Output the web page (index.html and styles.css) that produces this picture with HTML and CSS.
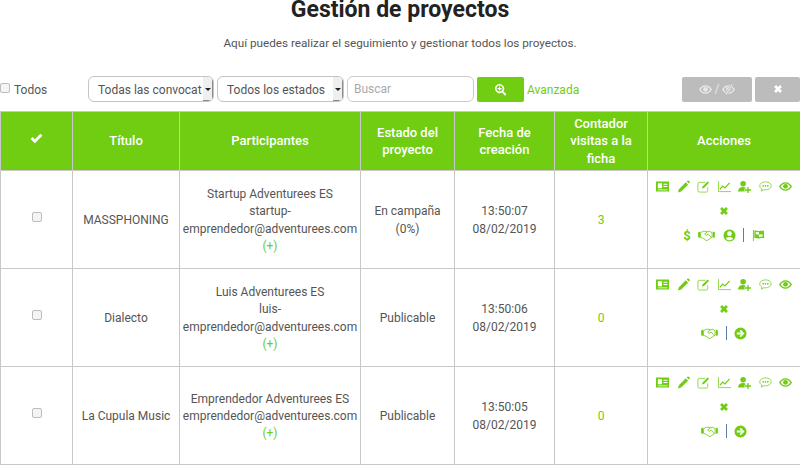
FILE: index.html
```html
<!DOCTYPE html>
<html lang="es">

<head>
    <meta charset="UTF-8" />
    <meta name="viewport" content="width=device-width, initial-scale=1.0" />
    <link rel="stylesheet" href="styles.css">
    <title>Gestión de proyectos</title>
</head>

<body>
    <svg class="sprites" width="0" height="0">
        <symbol id="i-card" viewBox="0 0 14 12">
            <path fill-rule="evenodd" d="M0 .5h14v11H0zM2 2.500v5.500h4.500V2.500zM8 3v1h4.300V3zM8 5.500v1h4.300v-1zM2 9.200v.8h10.300v-.8z" />
        </symbol>
        <symbol id="i-pencil" viewBox="0 0 14 14">
            <path d="M9.500 2.500l2.500 2.500-7.500 7.500-3.500 1 1-3.500zM10.500 1.500l.8-.8c.4-.3 1-.3 1.300 0l1 1c.3.400.3.900 0 1.300l-.8.800z" />
        </symbol>
        <symbol id="i-edit" viewBox="0 0 14 14">
            <path fill="none" stroke="currentColor" stroke-width=".8" d="M11.500 8v3.500a1.500 1.500 0 0 1-1.500 1.500H2.500A1.500 1.500 0 0 1 1 11.500V4a1.500 1.500 0 0 1 1.500-1.500H9" />
            <path d="M11.500 1.500l1.500 1.500-5.500 5.500-2.200.7.700-2.200z" />
        </symbol>
        <symbol id="i-chart" viewBox="0 0 14 14">
            <path fill="none" stroke="currentColor" stroke-width=".8" d="M.5 1v11.500H14" />
            <path fill="none" stroke="currentColor" stroke-width="1.300" d="M2 10l3-3.500 2.500 2L12.500 3" />
        </symbol>
        <symbol id="i-user-add" viewBox="0 0 14 14">
            <circle cx="5.500" cy="4" r="3" />
            <path d="M0 12.500c0-3 2-5 5.500-5 1 0 1.900.2 2.600.5v1.500H7v2.500h1v.500zM10 7.500h1.500V10H14v1.500h-2.500V14H10v-2.500H7.500V10H10z" />
        </symbol>
        <symbol id="i-comment" viewBox="0 0 14 14">
            <path fill="none" stroke="currentColor" stroke-width=".8" d="M7 2C3.500 2 .8 3.900.8 6.300c0 1.400.9 2.600 2.300 3.400L2.600 12l2.700-1.600c.5.100 1.100.2 1.700.2 3.500 0 6.200-1.900 6.200-4.300S10.500 2 7 2z" />
            <circle cx="4.500" cy="6.300" r=".9" />
            <circle cx="7" cy="6.300" r=".9" />
            <circle cx="9.500" cy="6.300" r=".9" />
        </symbol>
        <symbol id="i-eye" viewBox="0 0 14 14">
            <path fill-rule="evenodd" d="M7 2.500c3 0 5.500 1.800 7 4.500-1.500 2.700-4 4.500-7 4.500S1.500 9.700 0 7c1.500-2.700 4-4.500 7-4.500zM7 3.800C5 3.800 3.200 5 1.800 7 3.200 9 5 10.200 7 10.200S10.800 9 12.200 7C10.800 5 9 3.800 7 3.800z" />
            <circle cx="7" cy="6.800" r="2.600" />
        </symbol>
        <symbol id="i-eye-off" viewBox="0 0 14 14">
            <path fill-rule="evenodd" d="M7 2.500c3 0 5.500 1.800 7 4.500-1.500 2.700-4 4.500-7 4.500S1.500 9.700 0 7c1.500-2.700 4-4.500 7-4.500zM7 3.800C5 3.800 3.200 5 1.800 7 3.200 9 5 10.200 7 10.200S10.800 9 12.200 7C10.800 5 9 3.800 7 3.800z" />
            <circle cx="7" cy="6.800" r="2.600" />
            <path fill="none" stroke="#bcbcbc" stroke-width="2.600" d="M11 1.500L4 12.500" />
            <path fill="none" stroke="currentColor" stroke-width="1.100" d="M11 1.500L4 12.500" />
        </symbol>
        <symbol id="i-remove" viewBox="0 0 14 14">
            <path d="M4.200 1.500L7 4.300l2.800-2.800 2.700 2.700L9.700 7l2.800 2.800-2.700 2.700L7 9.700l-2.800 2.800-2.700-2.700L4.300 7 1.500 4.200z" />
        </symbol>
        <symbol id="i-check" viewBox="0 0 14 14">
            <path d="M5.200 12.200L.6 7.600l2.200-2.200 2.400 2.400 6-6 2.200 2.200z" />
        </symbol>
        <symbol id="i-zoom" viewBox="0 0 14 14">
            <path fill-rule="evenodd" d="M6 1a5 5 0 0 1 4 8l3.300 3.200-1.400 1.400L8.600 10.300A5 5 0 1 1 6 1zM6 2.800a3.200 3.200 0 1 0 0 6.400 3.200 3.200 0 0 0 0-6.400z" />
            <path d="M5.400 3.900h1.200v1.500h1.500v1.200H6.600v1.500H5.400V6.600H3.900V5.400h1.500z" />
        </symbol>
        <symbol id="i-hands" viewBox="0 0 18 14">
            <path d="M0 3.500l2.200-.7v6.700L0 9.200zM18 3.500l-2.200-.7v6.700l2.200-.3z" />
            <path fill="none" stroke="currentColor" stroke-width=".9" d="M2.500 4l3-1.500h3l1.500.5 2.500-.5 2.500 1.500v5l-2 1-3 2.300h-1.500l-3-2.300-3-1z" />
            <path fill="none" stroke="currentColor" stroke-width=".9" d="M10 3L7 5.500l1.500 1.300L11 5.500l3 3.500" />
        </symbol>
        <symbol id="i-user-circle" viewBox="0 0 14 14">
            <path fill-rule="evenodd" d="M7 .5a6.500 6.500 0 1 1 0 13 6.500 6.500 0 0 1 0-13zM7 2.500a2.500 2.500 0 1 0 0 5 2.500 2.500 0 0 0 0-5zM7 8.500c-2 0-3.400.8-4 2 1 1 2.400 1.600 4 1.600s3-.6 4-1.600c-.6-1.200-2-2-4-2z" />
        </symbol>
        <symbol id="i-flag" viewBox="0 0 14 14">
            <path fill-rule="evenodd" d="M1 1h1v12H1zM2.500 2c2-.8 3.500.6 5.500.2 1.800-.4 3.200-.5 5-.2v8c-1.800-.3-3.200-.2-5 .2-2 .4-3.500-1-5.500-.2zM7.500 3.500L4 3.300v2.400l3.500.4zM7.500 6.100v2.500l3.800-.4V5.700z" />
        </symbol>
        <symbol id="i-arrow" viewBox="0 0 14 14">
            <path fill-rule="evenodd" d="M7 .5a6.500 6.500 0 1 1 0 13 6.500 6.500 0 0 1 0-13zM7.300 3L6 4.300 7.700 6H3v2h4.700L6 9.700 7.300 11l4-4z" />
        </symbol>
    </svg>

    <section class="main">
        <h1 class="title">Gestión de proyectos</h1>
        <p class="intro">Aquí puedes realizar el seguimiento y gestionar todos los proyectos.</p>

        <div class="toolbar">
            <label class="check-all"><input type="checkbox" /> Todos</label>
            <div class="select select-call"><span class="select-text">Todas las convocat</span><span class="select-arrow"></span></div>
            <div class="select select-state"><span class="select-text">Todos los estados</span><span class="select-arrow"></span></div>
            <input class="search" type="text" placeholder="Buscar" />
            <button type="button" class="btn btn-search"><svg class="icon"><use href="#i-zoom" /></svg></button>
            <a class="advanced">Avanzada</a>
            <button type="button" class="btn btn-grey btn-toggle"><svg class="icon"><use href="#i-eye" /></svg> / <svg class="icon"><use href="#i-eye-off" /></svg></button>
            <button type="button" class="btn btn-grey btn-clear"><svg class="icon icon-sm"><use href="#i-remove" /></svg></button>
        </div>

        <table class="projects">
            <colgroup>
                <col class="col-check" />
                <col class="col-title" />
                <col class="col-people" />
                <col class="col-state" />
                <col class="col-date" />
                <col class="col-count" />
                <col class="col-actions" />
            </colgroup>
            <thead>
                <tr>
                    <th><svg class="icon"><use href="#i-check" /></svg></th>
                    <th>Título</th>
                    <th>Participantes</th>
                    <th>Estado del proyecto</th>
                    <th>Fecha de creación</th>
                    <th>Contador visitas a la ficha</th>
                    <th>Acciones</th>
                </tr>
            </thead>
            <tbody>
                <tr>
                    <td><input type="checkbox" /></td>
                    <td>MASSPHONING</td>
                    <td>Startup Adventurees ES<br />startup-<br />emprendedor@adventurees.com<br /><a class="more">(+)</a></td>
                    <td>En campaña<br />(0%)</td>
                    <td>13:50:07<br />08/02/2019</td>
                    <td class="count">3</td>
                    <td class="actions">
                        <div class="icons">
                            <svg class="icon"><use href="#i-card" /></svg>
                            <svg class="icon"><use href="#i-pencil" /></svg>
                            <svg class="icon"><use href="#i-edit" /></svg>
                            <svg class="icon"><use href="#i-chart" /></svg>
                            <svg class="icon"><use href="#i-user-add" /></svg>
                            <svg class="icon"><use href="#i-comment" /></svg>
                            <svg class="icon"><use href="#i-eye" /></svg>
                        </div>
                        <div class="icons"><svg class="icon icon-sm"><use href="#i-remove" /></svg></div>
                        <div class="icons">
                            <span class="dollar">$</span>
                            <svg class="icon icon-wide"><use href="#i-hands" /></svg>
                            <svg class="icon"><use href="#i-user-circle" /></svg>
                            <span class="sep"></span>
                            <svg class="icon"><use href="#i-flag" /></svg>
                        </div>
                    </td>
                </tr>
                <tr>
                    <td><input type="checkbox" /></td>
                    <td>Dialecto</td>
                    <td>Luis Adventurees ES<br />luis-<br />emprendedor@adventurees.com<br /><a class="more">(+)</a></td>
                    <td>Publicable</td>
                    <td>13:50:06<br />08/02/2019</td>
                    <td class="count">0</td>
                    <td class="actions">
                        <div class="icons">
                            <svg class="icon"><use href="#i-card" /></svg>
                            <svg class="icon"><use href="#i-pencil" /></svg>
                            <svg class="icon"><use href="#i-edit" /></svg>
                            <svg class="icon"><use href="#i-chart" /></svg>
                            <svg class="icon"><use href="#i-user-add" /></svg>
                            <svg class="icon"><use href="#i-comment" /></svg>
                            <svg class="icon"><use href="#i-eye" /></svg>
                        </div>
                        <div class="icons"><svg class="icon icon-sm"><use href="#i-remove" /></svg></div>
                        <div class="icons">
                            <svg class="icon icon-wide"><use href="#i-hands" /></svg>
                            <span class="sep"></span>
                            <svg class="icon"><use href="#i-arrow" /></svg>
                        </div>
                    </td>
                </tr>
                <tr>
                    <td><input type="checkbox" /></td>
                    <td>La Cupula Music</td>
                    <td>Emprendedor Adventurees ES<br />emprendedor@adventurees.com<br /><a class="more">(+)</a></td>
                    <td>Publicable</td>
                    <td>13:50:05<br />08/02/2019</td>
                    <td class="count">0</td>
                    <td class="actions">
                        <div class="icons">
                            <svg class="icon"><use href="#i-card" /></svg>
                            <svg class="icon"><use href="#i-pencil" /></svg>
                            <svg class="icon"><use href="#i-edit" /></svg>
                            <svg class="icon"><use href="#i-chart" /></svg>
                            <svg class="icon"><use href="#i-user-add" /></svg>
                            <svg class="icon"><use href="#i-comment" /></svg>
                            <svg class="icon"><use href="#i-eye" /></svg>
                        </div>
                        <div class="icons"><svg class="icon icon-sm"><use href="#i-remove" /></svg></div>
                        <div class="icons">
                            <svg class="icon icon-wide"><use href="#i-hands" /></svg>
                            <span class="sep"></span>
                            <svg class="icon"><use href="#i-arrow" /></svg>
                        </div>
                    </td>
                </tr>
            </tbody>
        </table>
    </section>
</body>

</html>
```

FILE: styles.css
```css
* {
    margin: 0;
    padding: 0;
    box-sizing: border-box;
    font-family: "Roboto", "Open Sans", sans-serif;
}

body {
    background-color: #ffffff;
    color: #555555;
    font-size: 12px;
    overflow: hidden;
}

.sprites {
    position: absolute;
}

.title {
    color: #222222;
    font-size: 23px;
    font-weight: 700;
    line-height: 19px;
    text-align: center;
}

.intro {
    margin-top: 15px;
    font-size: 11.700px;
    line-height: 18px;
    text-align: center;
}

.toolbar {
    display: flex;
    align-items: center;
    height: 28px;
    margin-top: 23px;
}

.check-all {
    display: flex;
    align-items: center;
    gap: 4px;
    width: 88px;
    padding-top: 1px;
}

.check-all input,
.projects td input {
    appearance: none;
    width: 10px;
    height: 10px;
    background-color: #f4f4f4;
    border: 1px solid #bdbdbd;
    border-radius: 2px;
}

.check-all input {
    margin-top: -3px;
}

.select {
    display: flex;
    align-items: center;
    height: 26px;
    padding-left: 9px;
    border: 1px solid #c4c4c4;
    border-radius: 6px;
    overflow: hidden;
}

.select-call {
    width: 126px;
}

.select-state {
    width: 127px;
    margin-left: 3px;
}

.select-text {
    flex: 1;
    padding-top: 1px;
    overflow: hidden;
    white-space: nowrap;
}

.select-arrow {
    position: relative;
    flex: none;
    width: 10px;
    height: 100%;
    background-color: #efefef;
    border-right: 1px solid #8a8a8a;
    border-bottom: 1px solid #8a8a8a;
}

.select-arrow::after {
    content: "";
    position: absolute;
    top: 11px;
    left: 2px;
    border: 3px solid transparent;
    border-top-color: #222222;
}

.search {
    width: 127px;
    height: 26px;
    margin-left: 3px;
    padding-left: 6px;
    border: 1px solid #cccccc;
    border-radius: 6px;
    font-size: 12px;
    outline: none;
}

.search::placeholder {
    color: #aaaaaa;
}

.btn {
    display: flex;
    align-items: center;
    justify-content: center;
    gap: 3px;
    height: 25px;
    border: none;
    border-radius: 2px;
    color: #ffffff;
}

.btn-search {
    width: 47px;
    margin-left: 3px;
    background-color: #70cd12;
}

.advanced {
    margin: 2px 0 0 3px;
    color: #70cd12;
}

.btn-grey {
    background-color: #bcbcbc;
    color: #e8e8e8;
    font-size: 12px;
}

.btn-toggle {
    width: 70px;
    margin-left: auto;
}

.btn-clear {
    width: 45px;
    margin-left: 3px;
    color: #ffffff;
}

.icon {
    width: 13px;
    height: 13px;
    fill: currentColor;
    flex: none;
}

.icon-sm {
    width: 10px;
    height: 10px;
}

.icon-wide {
    width: 17px;
}

.projects {
    width: 800px;
    margin-top: 8px;
    table-layout: fixed;
    border-collapse: collapse;
    text-align: center;
}

.col-check { width: 72px; }
.col-title { width: 107px; }
.col-people { width: 181px; }
.col-state { width: 94px; }
.col-date { width: 100px; }
.col-count { width: 93px; }
.col-actions { width: 153px; }

.projects th,
.projects td {
    border: 1px solid #c8c8c8;
    line-height: 17.300px;
    vertical-align: middle;
}

.projects th {
    height: 59px;
    background-color: #70cd12;
    color: #ffffff;
    font-size: 13px;
    font-weight: 500;
}

.projects td {
    height: 98px;
    padding-top: 2px;
}

.projects td input {
    display: block;
    margin: -8px auto 0;
}

.more,
.count {
    color: #70cd12;
}

.projects .actions {
    padding-top: 3px;
    vertical-align: top;
    color: #70cd12;
}

.icons {
    display: flex;
    align-items: center;
    justify-content: center;
    gap: 7.500px;
    height: 24.500px;
}

.dollar {
    font-size: 13px;
    font-weight: 700;
}

.sep {
    width: 1px;
    height: 14px;
    background-color: #5a7ea8;
}
```
